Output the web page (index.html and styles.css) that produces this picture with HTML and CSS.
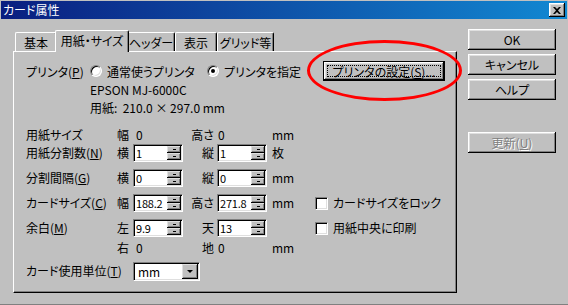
FILE: index.html
```html
<!DOCTYPE html>
<html lang="ja">

<head>
    <meta charset="UTF-8">
    <title>カード属性</title>
    <link rel="stylesheet" href="styles.css">
</head>

<body>

    <div class="window">
        <div class="titlebar">
            <span class="title">カード属性</span>
            <span class="close">
                <svg width="8" height="7" viewBox="0 0 8 7"><path d="M0 0h2l2 2 2-2h2L5 3.5 8 7H6L4 5 2 7H0l3-3.5z" fill="#000"/></svg>
            </span>
        </div>

        <div class="main">
            <div class="tabs-area">
                <div class="tabs">
                    <div class="tab tab-basic">基本</div>
                    <div class="tab tab-paper active">用紙・サイズ</div>
                    <div class="tab tab-header">ヘッダー</div>
                    <div class="tab tab-view">表示</div>
                    <div class="tab tab-grid">グリッド等</div>
                </div>

                <div class="panel">
                    <div class="printer-row">
                        <span class="printer-label">プリンタ(<u>P</u>)</span>
                        <span class="radio"></span><span class="radio-text">通常使うプリンタ</span>
                        <span class="radio checked"></span><span class="radio-text last">プリンタを指定</span>
                        <button class="btn btn-printer"><span class="focus">プリンタの設定(<u>S</u>)...</span></button>
                    </div>
                    <div class="info">EPSON MJ-6000C</div>
                    <div class="info">用紙:&nbsp; 210.0 × 297.0 mm</div>

                    <div class="form">
                        <!-- 用紙サイズ -->
                        <span>用紙サイズ</span>
                        <span>幅</span>
                        <span class="val">0</span>
                        <span class="r">高さ</span>
                        <span class="val2">0</span>
                        <span class="unit">mm</span>
                        <span></span>

                        <!-- 分割数 -->
                        <span>用紙分割数(<u>N</u>)</span>
                        <span>横</span>
                        <div class="spin"><span class="spin-text">1</span><span class="spin-btns"><i class="up"></i><i class="down"></i></span></div>
                        <span class="r">縦</span>
                        <div class="spin"><span class="spin-text">1</span><span class="spin-btns"><i class="up"></i><i class="down"></i></span></div>
                        <span class="unit">枚</span>
                        <span></span>

                        <!-- 分割間隔 -->
                        <span>分割間隔(<u>G</u>)</span>
                        <span>横</span>
                        <div class="spin"><span class="spin-text">0</span><span class="spin-btns"><i class="up"></i><i class="down"></i></span></div>
                        <span class="r">縦</span>
                        <div class="spin"><span class="spin-text">0</span><span class="spin-btns"><i class="up"></i><i class="down"></i></span></div>
                        <span class="unit">mm</span>
                        <span></span>

                        <!-- カードサイズ -->
                        <span>カードサイズ(<u>C</u>)</span>
                        <span>幅</span>
                        <div class="spin"><span class="spin-text">188.2</span><span class="spin-btns"><i class="up"></i><i class="down"></i></span></div>
                        <span class="r">高さ</span>
                        <div class="spin"><span class="spin-text">271.8</span><span class="spin-btns"><i class="up"></i><i class="down"></i></span></div>
                        <span class="unit">mm</span>
                        <label class="check"><span class="box"></span>カードサイズをロック</label>

                        <!-- 余白 -->
                        <span>余白(<u>M</u>)</span>
                        <span>左</span>
                        <div class="spin"><span class="spin-text">9.9</span><span class="spin-btns"><i class="up"></i><i class="down"></i></span></div>
                        <span class="r">天</span>
                        <div class="spin"><span class="spin-text">13</span><span class="spin-btns"><i class="up"></i><i class="down"></i></span></div>
                        <span></span>
                        <label class="check"><span class="box"></span>用紙中央に印刷</label>

                        <span></span>
                        <span>右</span>
                        <span class="val">0</span>
                        <span class="r">地</span>
                        <span class="val2">0</span>
                        <span class="unit">mm</span>
                        <span></span>

                        <span class="wide">カード使用単位(<u>T</u>)</span>
                        <div class="select"><span class="select-text">mm</span><span class="select-btn"><i></i></span></div>
                    </div>
                </div>
            </div>

            <div class="side">
                <button class="btn">OK</button>
                <button class="btn">キャンセル</button>
                <button class="btn">ヘルプ</button>
                <button class="btn disabled update">更新(<u>U</u>)</button>
            </div>
        </div>

        <div class="annotation"></div>
    </div>

</body>

</html>
```

FILE: styles.css
```css
body {
    margin: 0;
    font-family: "Noto Sans CJK JP", "Liberation Sans", sans-serif;
    font-size: 12px;
    font-feature-settings: "palt";
    background: #c0c0c0;
    color: #000;
}

.window {
    position: relative;
    width: 568px;
    height: 305px;
    box-sizing: border-box;
    border-bottom: 1px solid #808080;
    background: #c0c0c0;
    overflow: hidden;
}

.titlebar {
    height: 18px;
    margin: 1px 1px 0;
    padding-left: 2px;
    display: flex;
    align-items: center;
    justify-content: space-between;
    background: linear-gradient(90deg, #0a1e80, #1288d2);
    color: #fff;
    line-height: 18px;
}

.close {
    width: 16px;
    height: 14px;
    margin-right: 2px;
    display: flex;
    align-items: center;
    justify-content: center;
    background: #c0c0c0;
    box-shadow: inset -1px -1px #000, inset 1px 1px #fff, inset -2px -2px #808080, inset 2px 2px #dfdfdf;
}

.main {
    display: flex;
    padding: 10px 0 0 13px;
}

.tabs-area {
    margin-top: 1px;
    width: 444px;
}

.tabs {
    display: flex;
    align-items: flex-end;
    height: 21px;
    padding-left: 2px;
}

.tab {
    height: 19px;
    box-sizing: border-box;
    display: flex;
    align-items: center;
    justify-content: center;
    border-left: 1px solid #fff;
    border-top: 1px solid #fff;
    border-right: 1px solid #000;
    border-top-left-radius: 2px;
    border-top-right-radius: 2px;
    box-shadow: inset -1px 0 #808080;
    background: #c0c0c0;
}

.tab.active {
    position: relative;
    z-index: 1;
    height: 22px;
    margin: 0 -2px -1px;
    padding-bottom: 2px;
}

.tab-basic { width: 42px; }
.tab-paper { width: 74px; }
.tab-header { width: 48px; }
.tab-view { width: 42px; }
.tab-grid { width: 57px; }

.panel {
    height: 242px;
    box-sizing: border-box;
    padding: 9px 0 0 12px;
    border: 1px solid;
    border-color: #fff #000 #000 #fff;
    box-shadow: inset -1px -1px #808080;
}

.printer-row {
    display: flex;
    align-items: center;
    height: 20px;
}

.printer-label {
    width: 64px;
}

.radio {
    position: relative;
    width: 12px;
    height: 12px;
    box-sizing: border-box;
    margin-right: 5px;
    border-radius: 50%;
    border: 1px solid;
    border-color: #808080 #fff #fff #808080;
    box-shadow: inset 1px 1px #000, inset -1px -1px #dfdfdf;
    background: #fff;
}

.radio.checked::after {
    content: "";
    position: absolute;
    left: 3px;
    top: 3px;
    width: 4px;
    height: 4px;
    border-radius: 50%;
    background: #000;
}

.radio-text {
    width: 100px;
}

.radio-text.last {
    width: 99px;
}

.info {
    height: 18px;
    line-height: 18px;
    padding-left: 64px;
}

.form {
    display: grid;
    margin-top: 9px;
    grid-template-columns: 91px 16px 50px 34px 50px 48px auto;
    grid-template-rows: 18px 25px 25px 25px 20px 23px 20px;
    align-items: start;
    line-height: 18px;
}

.r {
    text-align: right;
    padding-right: 3px;
}

.val {
    padding-left: 3px;
}

.val2 {
    padding-left: 1px;
}

.unit {
    padding-left: 5px;
}

.wide {
    grid-column: span 2;
}

.spin {
    display: flex;
    width: 50px;
    height: 18px;
    box-sizing: border-box;
    padding: 1px;
    border: 1px solid;
    border-color: #808080 #fff #fff #808080;
    box-shadow: inset 1px 1px #000, inset -1px -1px #dfdfdf;
    background: #fff;
}

.spin-text {
    flex: 1;
    padding-left: 1px;
    font-size: 11px;
    line-height: 14px;
    letter-spacing: -0.2px;
    overflow: hidden;
}

.spin-btns {
    width: 14px;
    display: flex;
    flex-direction: column;
}

.spin-btns i,
.select-btn {
    flex: 1;
    display: flex;
    align-items: center;
    justify-content: center;
    background: #c0c0c0;
    box-shadow: inset -1px -1px #000, inset 1px 1px #dfdfdf, inset -2px -2px #808080;
}

.spin-btns i::before {
    content: "";
    width: 3px;
    height: 1px;
    background: #000;
}

.check {
    display: flex;
    align-items: center;
    height: 18px;
}

.box {
    width: 13px;
    height: 13px;
    box-sizing: border-box;
    margin-right: 5px;
    border: 1px solid;
    border-color: #808080 #fff #fff #808080;
    box-shadow: inset 1px 1px #000, inset -1px -1px #dfdfdf;
    background: #fff;
}

.select {
    grid-column: span 2;
    display: flex;
    width: 67px;
    height: 19px;
    box-sizing: border-box;
    padding: 1px;
    border: 1px solid;
    border-color: #808080 #fff #fff #808080;
    box-shadow: inset 1px 1px #000, inset -1px -1px #dfdfdf;
    background: #fff;
}

.select-text {
    flex: 1;
    padding-left: 3px;
    line-height: 15px;
}

.select-btn {
    flex: 0 0 16px;
}

.select-btn i {
    width: 0;
    height: 0;
    border-left: 3px solid transparent;
    border-right: 3px solid transparent;
    border-top: 3px solid #000;
}

.btn {
    width: 88px;
    height: 21px;
    box-sizing: border-box;
    padding: 0;
    border: none;
    font: inherit;
    color: #000;
    background: #c0c0c0;
    box-shadow: inset -1px -1px #000, inset 1px 1px #fff, inset -2px -2px #808080, inset 2px 2px #dfdfdf;
}

.btn-printer {
    display: flex;
    width: 122px;
    height: 20px;
    padding: 2px;
    border: 1px solid #000;
}

.focus {
    flex: 1;
    display: flex;
    align-items: center;
    justify-content: center;
    margin: 1px;
    border: 1px dotted #000;
}

.side {
    display: flex;
    flex-direction: column;
    gap: 4px;
    margin-left: 11px;
}

.update {
    margin-top: 28px;
}

.disabled {
    color: #808080;
    text-shadow: 1px 1px 0 #fff;
}

.annotation {
    position: absolute;
    left: 307px;
    top: 40px;
    width: 155px;
    height: 61px;
    box-sizing: border-box;
    border: 3px solid #f00;
    border-radius: 50%;
    z-index: 5;
}
```
